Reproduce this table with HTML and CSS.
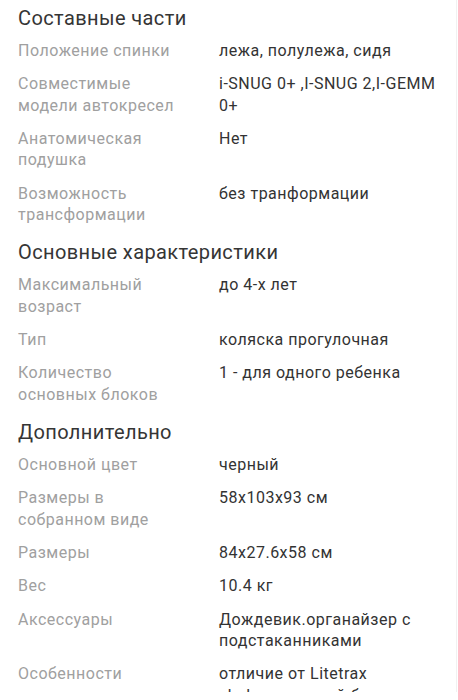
FILE: index.html
```html
<!DOCTYPE html>
<html lang="ru">
<head>
<meta charset="utf-8">
<title>Характеристики</title>
<link rel="stylesheet" href="styles.css">
</head>
<body>
<div class="page">
  <section class="group">
    <h2 class="group-title">Составные части</h2>
    <dl class="specs">
      <div class="row"><dt>Положение спинки</dt><dd>лежа, полулежа, сидя</dd></div>
      <div class="row"><dt>Совместимые модели автокресел</dt><dd>i-SNUG 0+ ,I-SNUG 2,I-GEMM<br>0+</dd></div>
      <div class="row"><dt>Анатомическая подушка</dt><dd>Нет</dd></div>
      <div class="row"><dt>Возможность трансформации</dt><dd>без транформации</dd></div>
    </dl>
  </section>
  <section class="group">
    <h2 class="group-title">Основные характеристики</h2>
    <dl class="specs">
      <div class="row"><dt>Максимальный возраст</dt><dd>до 4-х лет</dd></div>
      <div class="row"><dt>Тип</dt><dd>коляска прогулочная</dd></div>
      <div class="row"><dt>Количество основных блоков</dt><dd>1 - для одного ребенка</dd></div>
    </dl>
  </section>
  <section class="group">
    <h2 class="group-title">Дополнительно</h2>
    <dl class="specs">
      <div class="row"><dt>Основной цвет</dt><dd>черный</dd></div>
      <div class="row"><dt>Размеры в собранном виде</dt><dd>58x103x93 см</dd></div>
      <div class="row"><dt>Размеры</dt><dd>84x27.6x58 см</dd></div>
      <div class="row"><dt>Вес</dt><dd>10.4 кг</dd></div>
      <div class="row"><dt>Аксессуары</dt><dd>Дождевик.органайзер с подстаканниками</dd></div>
      <div class="row"><dt>Особенности</dt><dd>отличие от Litetrax<br>shale защитный бампер</dd></div>
    </dl>
  </section>
</div>
</body>
</html>
```
FILE: styles.css
```css
html, body {
  margin: 0;
  padding: 0;
  background: #ffffff;
}

body {
  font-family: Roboto, "Noto Sans", "Liberation Sans", sans-serif;
  color: #333333;
}

.page {
  width: 457px;
  height: 692px;
  overflow: hidden;
  border-right: 1px solid #f1f1f1;
  padding: 5px 0 0 18px;
  box-sizing: border-box;
  display: flex;
  flex-direction: column;
  gap: 8px;
}

.group-title {
  margin: 0 0 3px;
  font-size: 20px;
  line-height: 26px;
  font-weight: 400;
  letter-spacing: 0.4px;
  color: #353535;
}

.specs {
  margin: 0;
  display: flex;
  flex-direction: column;
}

.row {
  display: grid;
  grid-template-columns: 170px 226px;
  column-gap: 31px;
  padding: 6px 0;
  font-size: 16px;
  line-height: 21.33px;
  letter-spacing: 0.5px;
}

.row dt {
  color: #a0a0a0;
}

.row dd {
  margin: 0;
  color: #333333;
}
```
